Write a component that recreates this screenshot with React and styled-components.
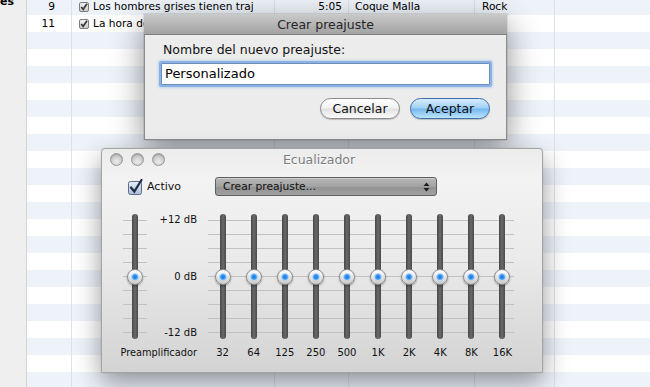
import React from "react";
import styled, { createGlobalStyle } from "styled-components";

const uiFont = `"Lucida Grande", "DejaVu Sans", sans-serif`;

const GlobalStyle = createGlobalStyle`
  html, body {
    margin: 0;
    padding: 0;
  }
  body {
    width: 650px;
    height: 387px;
    overflow: hidden;
    font-family: ${uiFont};
    color: #000;
  }
`;

const Screen = styled.div`
  position: relative;
  width: 650px;
  height: 387px;
  overflow: hidden;
  display: flex;
  background: #fff;
`;

const Sidebar = styled.div`
  width: 26px;
  flex: none;
  background: #efefef;
  border-right: 1px solid #d4d4d4;
  overflow: hidden;
`;

const SideTitle = styled.div`
  margin-top: -5px;
  font-size: 11px;
  font-weight: bold;
  line-height: 13px;
  white-space: nowrap;
`;

const Table = styled.div`
  flex: 1;
  margin-top: -2px;
`;

const Row = styled.div`
  display: flex;
  height: 17px;
  font-size: 10.6px;
  line-height: 17px;
  background: ${(p) => (p.$alt ? "#fff" : "#eef3fa")};
`;

const Cell = styled.div`
  flex: none;
  width: ${(p) => p.$w}px;
  box-sizing: border-box;
  border-right: 1px solid ${(p) => (p.$line ? "#dde2e9" : "transparent")};
  padding: ${(p) => p.$pad || "0"};
  white-space: nowrap;
  overflow: hidden;
  display: flex;
  align-items: center;
  justify-content: ${(p) => (p.$align === "right" ? "flex-end" : "flex-start")};
`;

const FillCell = styled.div`
  flex: 1;
`;

const TitleText = styled.span`
  display: block;
  max-width: 160px;
  overflow: hidden;
  margin-left: 4px;
`;

const SmallCheck = () => (
  <svg width="10" height="10" viewBox="0 0 10 10">
    <defs>
      <linearGradient id="sc" x1="0" y1="0" x2="0" y2="1">
        <stop offset="0" stopColor="#f4f4f4" />
        <stop offset="1" stopColor="#c9c9c9" />
      </linearGradient>
    </defs>
    <rect x="0.5" y="0.5" width="9" height="9" rx="1.5" fill="url(#sc)" stroke="#7d7d7d" />
    <path d="M2.2 5 L4.2 7.3 L8 1.8" fill="none" stroke="#3a3a3a" strokeWidth="1.7" />
  </svg>
);

/* ---------- dialog ---------- */

const Dialog = styled.div`
  position: absolute;
  left: 144px;
  top: 14px;
  width: 363px;
  height: 126px;
  box-sizing: border-box;
  background: #ececec;
  border: 1px solid #8e8e8e;
  border-top: none;
  box-shadow: 0 10px 30px rgba(0, 0, 0, 0.45), 0 0 0 1px rgba(0, 0, 0, 0.08);
  display: flex;
  flex-direction: column;
  font-family: ${uiFont};
`;

const DialogTitle = styled.div`
  height: 21px;
  box-sizing: border-box;
  background: linear-gradient(#cacaca, #b6b6b6 50%, #a3a3a3);
  border-bottom: 1px solid #7f7f7f;
  margin: 0 -1px;
  text-align: center;
  font-size: 12.5px;
  line-height: 21px;
  color: #262626;
`;

const DialogBody = styled.div`
  padding: 7px 16px 0;
  display: flex;
  flex-direction: column;
`;

const FieldLabel = styled.div`
  margin-left: 2px;
  font-size: 12.5px;
  line-height: 16px;
  color: #111;
`;

const TextField = styled.div`
  margin-top: 5px;
  height: 22px;
  box-sizing: border-box;
  background: #fff;
  border: 1px solid #6d8fba;
  box-shadow: 0 0 0 2px rgba(120, 165, 225, 0.75), 0 0 2px 3px rgba(150, 190, 240, 0.5);
  border-radius: 1px;
  padding-left: 3px;
  font-size: 13px;
  line-height: 20px;
  color: #000;
`;

const ButtonRow = styled.div`
  margin-top: 13px;
  display: flex;
  justify-content: flex-end;
  gap: 10px;
`;

const PillButton = styled.div`
  width: 80px;
  height: 21px;
  box-sizing: border-box;
  border-radius: 11px;
  text-align: center;
  font-size: 12.5px;
  line-height: 19px;
  color: #111;
  border: 1px solid ${(p) => (p.$primary ? "#3f6fa8" : "#8a8a8a")};
  background: ${(p) =>
    p.$primary
      ? "linear-gradient(#d6edfd, #a3d2f6 45%, #78baf0 55%, #bde5fd)"
      : "linear-gradient(#ffffff, #f2f2f2 45%, #e3e3e3 55%, #fbfbfb)"};
  box-shadow: 0 1px 1px rgba(0, 0, 0, 0.2);
`;

/* ---------- equalizer ---------- */

const EqWindow = styled.div`
  position: absolute;
  left: 101px;
  top: 148px;
  width: 442px;
  height: 225px;
  box-sizing: border-box;
  border: 1px solid #a5a5a5;
  border-radius: 4px 4px 0 0;
  background: linear-gradient(#ececec, #f3f3f3 14%, #eaeaea 50%, #d3d3d3);
  box-shadow: 0 10px 26px rgba(0, 0, 0, 0.4), 0 0 1px rgba(0, 0, 0, 0.3);
  display: flex;
  flex-direction: column;
  font-family: ${uiFont};
`;

const EqTitleBar = styled.div`
  height: 20px;
  display: grid;
  grid-template-columns: 1fr auto 1fr;
  align-items: center;
  padding: 0 14px 0 8px;
`;

const Lights = styled.div`
  display: flex;
  gap: 8px;
`;

const Light = styled.div`
  width: 13px;
  height: 13px;
  box-sizing: border-box;
  border-radius: 50%;
  border: 1px solid #979797;
  background: radial-gradient(circle at 50% 70%, #ececec, #c9c9c9 60%, #b1b1b1);
  box-shadow: inset 0 1px 1px rgba(0, 0, 0, 0.15);
`;

const EqTitle = styled.div`
  font-size: 12.5px;
  color: #7c7c7c;
  text-shadow: 0 1px 0 #fff;
`;

const EqBody = styled.div`
  padding: 8px 0 0 21px;
  display: flex;
  flex-direction: column;
`;

const TopRow = styled.div`
  display: flex;
  align-items: center;
  height: 19px;
`;

const ActiveBox = styled.div`
  width: 92px;
  padding-left: 5px;
  box-sizing: border-box;
  display: flex;
  align-items: center;
  gap: 4px;
  font-size: 11px;
  color: #111;
`;

const Popup = styled.div`
  width: 222px;
  height: 19px;
  box-sizing: border-box;
  border: 1px solid #5f5f5f;
  border-radius: 3px;
  background: linear-gradient(#b7b7b7, #a2a2a2 50%, #939393 52%, #a0a0a0);
  box-shadow: inset 0 1px 0 rgba(255, 255, 255, 0.35);
  display: flex;
  align-items: center;
  justify-content: space-between;
  padding: 0 6px 0 7px;
  font-size: 10.7px;
  color: #111;
`;

const PopupArrows = () => (
  <svg width="7" height="10" viewBox="0 0 7 10">
    <path d="M3.5 0.5 L6.5 4 L0.5 4 Z M3.5 9.5 L6.5 6 L0.5 6 Z" fill="#1e1e1e" />
  </svg>
);

const SliderArea = styled.div`
  margin-top: 18px;
  display: flex;
  gap: 10px;
`;

const LeftGroup = styled.div`
  display: flex;
  flex-direction: column;
  width: 74px;
`;

const LeftTop = styled.div`
  display: flex;
`;

const tickBg = `
  background-image: repeating-linear-gradient(
    to bottom,
    transparent 0,
    transparent 6px,
    #c2c2c2 6px,
    #c2c2c2 7px,
    transparent 7px,
    transparent 14px
  );
  background-repeat: no-repeat;
`;

const PreampCol = styled.div`
  width: 24px;
  height: 125px;
  ${tickBg}
  background-size: 100% 125px;
  display: grid;
  place-items: center;
`;

const DbLabels = styled.div`
  width: 50px;
  height: 125px;
  display: flex;
  flex-direction: column;
  justify-content: space-between;
  align-items: flex-end;
  font-size: 10px;
  line-height: 12px;
  color: #111;
`;

const Caption = styled.div`
  margin-top: 8px;
  font-size: ${(p) => p.$size || 10}px;
  line-height: 12px;
  color: #111;
  align-self: ${(p) => (p.$end ? "flex-end" : "center")};
  white-space: nowrap;
`;

const BandGroup = styled.div`
  width: 311px;
  display: grid;
  grid-template-columns: repeat(10, 1fr);
  ${tickBg}
  background-size: calc(100% - 5px) 125px;
  background-position: 1px 0;
`;

const BandCol = styled.div`
  display: flex;
  flex-direction: column;
  align-items: center;
`;

const SliderBox = styled.div`
  height: 125px;
  width: 18px;
  display: grid;
  place-items: center;

  & > * {
    grid-area: 1 / 1;
  }
`;

const Track = styled.div`
  width: 6px;
  height: 125px;
  border-radius: 3px;
  background: linear-gradient(to right, #474747, #6a6a6a 50%, #4a4a4a);
`;

const Knob = styled.div`
  width: 16px;
  height: 16px;
  box-sizing: border-box;
  border-radius: 50%;
  border: 1px solid #8c8c8c;
  background: radial-gradient(circle, #1b74de 0, #3a93ee 2px, #7cc0fa 3px, #a9d6fb 3.5px, transparent 4px),
    linear-gradient(#ffffff, #e6e6e6 50%, #c9c9c9);
  box-shadow: 0 1px 2px rgba(0, 0, 0, 0.35);
`;

const Slider = () => (
  <SliderBox>
    <Track />
    <Knob />
  </SliderBox>
);

const BigCheck = () => (
  <svg width="15" height="16" viewBox="0 0 15 16">
    <defs>
      <linearGradient id="bc" x1="0" y1="0" x2="0" y2="1">
        <stop offset="0" stopColor="#eaf0f8" />
        <stop offset="1" stopColor="#a9bcd6" />
      </linearGradient>
    </defs>
    <rect x="0.5" y="2.5" width="13" height="13" rx="2" fill="url(#bc)" stroke="#5d6e8a" />
    <path d="M3 8.5 L6.3 12.5 L13.5 1" fill="none" stroke="#1d2c48" strokeWidth="2.2" strokeLinecap="round" />
  </svg>
);

const bands = ["32", "64", "125", "250", "500", "1K", "2K", "4K", "8K", "16K"];

const rows = [
  { n: "9", title: "Los hombres grises tienen traje", time: "5:05", artist: "Coque Malla", genre: "Rock" },
  { n: "11", title: "La hora de las tortugas", time: "", artist: "", genre: "" },
];

export default function App() {
  const emptyRows = Array.from({ length: 22 });
  return (
    <>
      <GlobalStyle />
      <Screen>
        <Sidebar>
          <SideTitle>es</SideTitle>
        </Sidebar>
        <Table>
          {rows.map((r, i) => (
            <Row key={r.n} $alt={i % 2 === 1}>
              <Cell $w={45} $line $align="right" $pad="0 16px 0 0">{r.n}</Cell>
              <Cell $w={203} $line $pad="0 0 0 7px">
                <SmallCheck />
                <TitleText>{r.title}</TitleText>
              </Cell>
              <Cell $w={74} $line $align="right" $pad="0 6px 0 0">{r.time}</Cell>
              <Cell $w={126} $line $pad="0 0 0 6px">{r.artist}</Cell>
              <Cell $w={80} $line $pad="0 0 0 7px">{r.genre}</Cell>
              <FillCell />
            </Row>
          ))}
          {emptyRows.map((_, i) => (
            <Row key={i} $alt={i % 2 === 1}>
              <Cell $w={45} $line />
              <Cell $w={203} $line />
              <Cell $w={74} $line />
              <Cell $w={126} $line />
              <Cell $w={80} $line />
              <FillCell />
            </Row>
          ))}
        </Table>

        <Dialog>
          <DialogTitle>Crear preajuste</DialogTitle>
          <DialogBody>
            <FieldLabel>Nombre del nuevo preajuste:</FieldLabel>
            <TextField>Personalizado</TextField>
            <ButtonRow>
              <PillButton>Cancelar</PillButton>
              <PillButton $primary>Aceptar</PillButton>
            </ButtonRow>
          </DialogBody>
        </Dialog>

        <EqWindow>
          <EqTitleBar>
            <Lights>
              <Light />
              <Light />
              <Light />
            </Lights>
            <EqTitle>Ecualizador</EqTitle>
            <div />
          </EqTitleBar>
          <EqBody>
            <TopRow>
              <ActiveBox>
                <BigCheck />
                Activo
              </ActiveBox>
              <Popup>
                Crear preajuste...
                <PopupArrows />
              </Popup>
            </TopRow>
            <SliderArea>
              <LeftGroup>
                <LeftTop>
                  <PreampCol>
                    <Slider />
                  </PreampCol>
                  <DbLabels>
                    <span>+12 dB</span>
                    <span>0 dB</span>
                    <span>-12 dB</span>
                  </DbLabels>
                </LeftTop>
                <Caption $end $size={9.8}>Preamplificador</Caption>
              </LeftGroup>
              <BandGroup>
                {bands.map((b) => (
                  <BandCol key={b}>
                    <Slider />
                    <Caption>{b}</Caption>
                  </BandCol>
                ))}
              </BandGroup>
            </SliderArea>
          </EqBody>
        </EqWindow>
      </Screen>
    </>
  );
}
